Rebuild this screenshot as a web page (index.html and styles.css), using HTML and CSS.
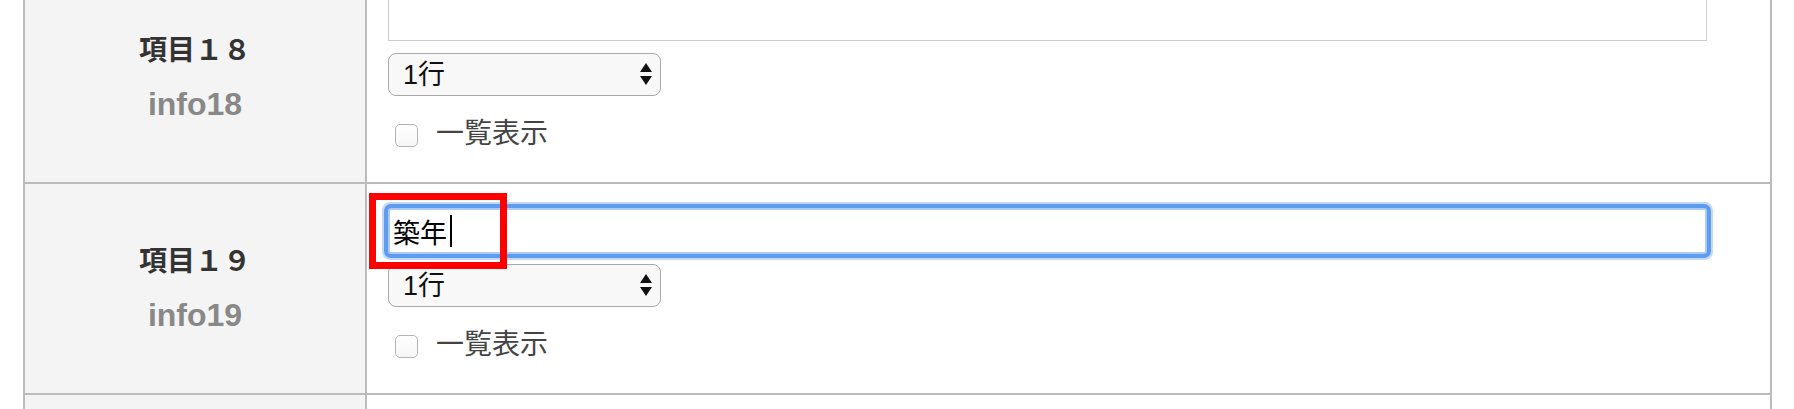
FILE: index.html
```html
<!DOCTYPE html>
<html lang="ja">
<head>
  <meta charset="UTF-8">
  <meta name="viewport" content="width=device-width, initial-scale=1.0">
  <title>項目設定</title>
  <link rel="stylesheet" href="styles.css">
</head>
<body>
  <div class="form-table">
    <div class="form-row">
      <div class="form-label">
        <span class="label-name">項目１８</span>
        <span class="label-key">info18</span>
      </div>
      <div class="form-field">
        <textarea class="field-area"></textarea>
        <div class="select-wrap">
          <select class="field-rows">
            <option>1行</option>
            <option>2行</option>
            <option>3行</option>
          </select>
          <svg class="select-arrows" viewBox="0 0 12 22"><polygon points="6,0 12,9 0,9"/><polygon points="0,13 12,13 6,22"/></svg>
        </div>
        <label class="field-check"><input type="checkbox"><span>一覧表示</span></label>
      </div>
    </div>
    <div class="form-row">
      <div class="form-label">
        <span class="label-name">項目１９</span>
        <span class="label-key">info19</span>
      </div>
      <div class="form-field">
        <div class="input-wrap">
          <input class="field-input is-focused" type="text" value="築年">
          <span class="caret"></span>
        </div>
        <div class="select-wrap">
          <select class="field-rows">
            <option>1行</option>
            <option>2行</option>
            <option>3行</option>
          </select>
          <svg class="select-arrows" viewBox="0 0 12 22"><polygon points="6,0 12,9 0,9"/><polygon points="0,13 12,13 6,22"/></svg>
        </div>
        <label class="field-check"><input type="checkbox"><span>一覧表示</span></label>
        <div class="mark"></div>
      </div>
    </div>
    <!-- next row, only its top edge is on screen -->
    <div class="form-row is-next">
      <div class="form-label"></div>
      <div class="form-field"></div>
    </div>
  </div>
</body>
</html>
```

FILE: styles.css
```css
body {
  margin: 0;
  background-color: #ffffff;
  font-family: "Liberation Sans", "Noto Sans CJK JP", sans-serif;
  color: #333333;
}
.form-table {
  margin: -29px 22px 0 23px;
  border-top: 2px solid #bbbbbb;
  border-left: 2px solid #bbbbbb;
  border-right: 2px solid #bbbbbb;
}
.form-row {
  display: grid;
  grid-template-columns: 342px 1fr;
  border-bottom: 2px solid #bbbbbb;
}
.form-row.is-next {
  height: 14px;
  border-bottom: none;
}
.form-row.is-next .form-field {
  padding: 0;
}
.form-label {
  display: flex;
  flex-direction: column;
  align-items: center;
  justify-content: center;
  gap: 20px;
  padding-bottom: 3px;
  background-color: #f4f4f4;
  border-right: 2px solid #bbbbbb;
  font-weight: bold;
}
.label-name {
  font-family: "Noto Sans CJK JP", sans-serif;
  font-size: 28px;
  line-height: 36px;
  color: #333333;
}
.label-key {
  font-size: 32px;
  line-height: 36px;
  color: #888888;
}
.form-field {
  position: relative;
  padding: 24px 63px 24px 21px;
}
.field-area {
  display: block;
  box-sizing: border-box;
  width: 100%;
  height: 44px;
  margin: 0 0 12px;
  border: 1px solid #cccccc;
  resize: none;
}
.input-wrap {
  position: relative;
  margin-bottom: 10px;
}
.field-input {
  display: block;
  box-sizing: border-box;
  width: 100%;
  height: 46px;
  margin: 0;
  padding: 0 0 0 3px;
  border: 2px solid #abcaf5;
  border-radius: 3px;
  font-family: "Noto Sans CJK JP", sans-serif;
  font-size: 27px;
  color: #000000;
  outline: none;
}
.field-input.is-focused {
  box-shadow: 0 0 0 4px #5e9cf0, 0 0 0 6px rgba(120, 170, 245, 0.45);
}
.caret {
  position: absolute;
  left: 62px;
  top: 7px;
  width: 2px;
  height: 32px;
  background-color: #000000;
}
.select-wrap {
  position: relative;
  width: 273px;
}
.field-rows {
  display: block;
  box-sizing: border-box;
  width: 273px;
  height: 43px;
  margin: 0;
  padding: 0 0 0 14px;
  border: 1px solid #a8a8a8;
  border-radius: 8px;
  background-color: #f8f8f8;
  font-family: "Liberation Sans", "Noto Sans CJK JP", sans-serif;
  font-size: 27px;
  color: #111111;
  appearance: none;
  -webkit-appearance: none;
}
.select-arrows {
  position: absolute;
  right: 9px;
  top: 10px;
  width: 12px;
  height: 22px;
  fill: #111111;
  pointer-events: none;
}
.field-check {
  display: flex;
  align-items: center;
  gap: 18px;
  height: 46px;
  margin-top: 16px;
  padding-left: 7px;
  font-family: "Noto Sans CJK JP", sans-serif;
  font-size: 28px;
  color: #444444;
}
.field-check span {
  margin-bottom: 8px;
}
.field-check input {
  box-sizing: border-box;
  width: 23px;
  height: 23px;
  margin: 0;
  border: 1px solid #b4b4b4;
  border-radius: 5px;
  background: linear-gradient(#ffffff, #f6f6f6);
  appearance: none;
  -webkit-appearance: none;
}
.mark {
  position: absolute;
  left: 2px;
  top: 9px;
  box-sizing: border-box;
  width: 138px;
  height: 76px;
  border: 7px solid #ff0000;
}
```
